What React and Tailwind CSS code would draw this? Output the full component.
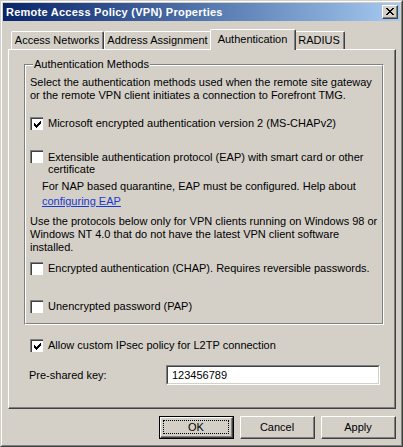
import React from 'react';

const font = { fontFamily: '"Liberation Sans", Arial, sans-serif' };

function CheckBox({ checked }) {
    return (
        <div className="w-[13px] h-[13px] shrink-0 border-l border-t border-[#808080] border-r-white border-b-white">
            <div className="w-full h-full border-l border-t border-[#404040] border-r-[#d4d0c8] border-b-[#d4d0c8] bg-white flex items-center justify-center">
                {checked && (
                    <svg width="7" height="7" viewBox="0 0 7 7" shapeRendering="crispEdges">
                        <path
                            fill="#000"
                            d="M6 0h1v1H6z M5 1h2v1H5z M0 2h1v1H0z M4 2h3v1H4z M0 3h2v1H0z M3 3h3v1H3z M0 4h5v1H0z M1 5h3v1H1z M2 6h1v1H2z"
                        />
                    </svg>
                )}
            </div>
        </div>
    );
}

function Tab({ label, width, selected }) {
    if (selected) {
        return (
            <div
                className={`relative z-10 -mx-[2px] -mb-[1px] h-[21px] bg-[#d4d0c8] border-l border-t border-white border-r border-r-[#404040] rounded-tl-[2px] rounded-tr-[2px] ${width}`}
            >
                <div className="h-full border-r border-[#808080] flex items-start justify-center pt-[3px]">
                    {label}
                </div>
            </div>
        );
    }
    return (
        <div className={`h-[18px] border-l border-t border-white border-r border-r-[#404040] rounded-tl-[2px] rounded-tr-[2px] ${width}`}>
            <div className="h-full border-r border-[#808080] flex items-center justify-center pb-[1px]">
                {label}
            </div>
        </div>
    );
}

function Button({ children, isDefault }) {
    if (isDefault) {
        return (
            <div className="w-[75px] h-[23px] border border-black">
                <div className="w-full h-full border-l border-t border-white border-r border-b border-r-[#404040] border-b-[#404040]">
                    <div className="w-full h-full border-r border-b border-[#808080] p-[2px]">
                        <div className="w-full h-full border border-dotted border-black flex items-center justify-center">
                            {children}
                        </div>
                    </div>
                </div>
            </div>
        );
    }
    return (
        <div className="w-[75px] h-[23px] border-l border-t border-white border-r border-b border-r-[#404040] border-b-[#404040]">
            <div className="w-full h-full border-r border-b border-[#808080] flex items-center justify-center">
                {children}
            </div>
        </div>
    );
}

export default function App() {
    return (
        <div
            style={font}
            className="w-[403px] h-[447px] bg-[#d4d0c8] text-[11px] leading-[13px] whitespace-nowrap text-black border-l border-t border-[#d4d0c8] border-r border-b border-r-[#404040] border-b-[#404040]"
        >
            <div className="w-full h-full border-l border-t border-white border-r border-b border-r-[#808080] border-b-[#808080] p-[1px] flex flex-col">
                {/* title bar */}
                <div className="h-[18px] flex items-center justify-between bg-gradient-to-r from-[#0a246a] to-[#a6caf0]">
                    <span className="pl-[3px] text-white font-bold text-[11px] tracking-[0.25px]">Remote Access Policy (VPN) Properties</span>
                    <div className="mr-[2px] w-[16px] h-[14px] bg-[#d4d0c8] border-l border-t border-white border-r border-b border-r-[#404040] border-b-[#404040]">
                        <div className="w-full h-full border-r border-b border-[#808080] flex items-center justify-center">
                            <svg width="8" height="7" viewBox="0 0 8 7" shapeRendering="crispEdges">
                                <path
                                    fill="#000"
                                    d="M0 0h2v1H0z M6 0h2v1H6z M1 1h2v1H1z M5 1h2v1H5z M2 2h4v1H2z M3 3h2v1H3z M2 4h4v1H2z M1 5h2v1H1z M5 5h2v1H5z M0 6h2v1H0z M6 6h2v1H6z"
                                />
                            </svg>
                        </div>
                    </div>
                </div>

                {/* tabs */}
                <div className="ml-[5px] mt-[8px] w-[388px]">
                    <div className="flex items-end h-[20px] pl-[3px]">
                        <Tab label="Access Networks" width="w-[93px]" />
                        <Tab label="Address Assignment" width="w-[108px]" />
                        <Tab label="Authentication" width="w-[86px]" selected />
                        <Tab label="RADIUS" width="w-[51px]" />
                    </div>

                    <div className="h-[360px] border-l border-t border-white border-r border-b border-r-[#404040] border-b-[#404040]">
                        <div className="w-full h-full border-r border-b border-[#808080] flex flex-col">
                            {/* group box */}
                            <div className="relative ml-[15px] mt-[14px] w-[360px] h-[261px] border-l border-t border-[#808080] border-r border-b border-r-white border-b-white">
                                <span className="absolute left-[8px] -top-[7px] px-[1px] bg-[#d4d0c8]">Authentication Methods</span>
                                <div className="w-full h-full border-l border-t border-white border-r border-b border-r-[#808080] border-b-[#808080] pl-[4px] pt-[10px] flex flex-col">
                                    <p>
                                        Select the authentication methods used when the remote site gateway
                                        <br />
                                        or the remote VPN client initiates a connection to Forefront TMG.
                                    </p>

                                    <div className="mt-[15px] flex items-start gap-[5px]">
                                        <CheckBox checked />
                                        <span>Microsoft encrypted authentication version 2 (MS-CHAPv2)</span>
                                    </div>

                                    <div className="mt-[20px] flex items-start gap-[5px]">
                                        <CheckBox />
                                        <span className="leading-[12px] pt-[1px]">
                                            Extensible authentication protocol (EAP) with smart card or other
                                            <br />
                                            certificate
                                        </span>
                                    </div>

                                    <div className="mt-[5px] pl-[12px]">
                                        <p>For NAP based quarantine, EAP must be configured. Help about</p>
                                        <a className="mt-[2px] block w-fit text-[#1a3acc] underline">configuring EAP</a>
                                    </div>

                                    <p className="mt-[7px]">
                                        Use the protocols below only for VPN clients running on Windows 98 or
                                        <br />
                                        Windows NT 4.0 that do not have the latest VPN client software
                                        <br />
                                        installed.
                                    </p>

                                    <div className="mt-[8px] flex items-start gap-[5px]">
                                        <CheckBox />
                                        <span>Encrypted authentication (CHAP). Requires reversible passwords.</span>
                                    </div>

                                    <div className="mt-[25px] flex items-start gap-[5px]">
                                        <CheckBox />
                                        <span>Unencrypted password (PAP)</span>
                                    </div>
                                </div>
                            </div>

                            <div className="ml-[21px] mt-[14px] flex items-start gap-[5px]">
                                <CheckBox checked />
                                <span>Allow custom IPsec policy for L2TP connection</span>
                            </div>

                            <div className="ml-[20px] mt-[13px] flex items-center">
                                <span className="w-[137px]">Pre-shared key:</span>
                                <div className="w-[214px] h-[20px] border-l border-t border-[#808080] border-r border-b border-r-white border-b-white">
                                    <div className="w-full h-full border-l border-t border-[#404040] border-r border-b border-r-[#d4d0c8] border-b-[#d4d0c8] bg-white flex items-center pl-[4px]">
                                        123456789
                                    </div>
                                </div>
                            </div>
                        </div>
                    </div>
                </div>

                {/* buttons */}
                <div className="mt-[7px] pr-[4px] flex justify-end gap-[6px]">
                    <Button isDefault>OK</Button>
                    <Button>Cancel</Button>
                    <Button>Apply</Button>
                </div>
            </div>
        </div>
    );
}
